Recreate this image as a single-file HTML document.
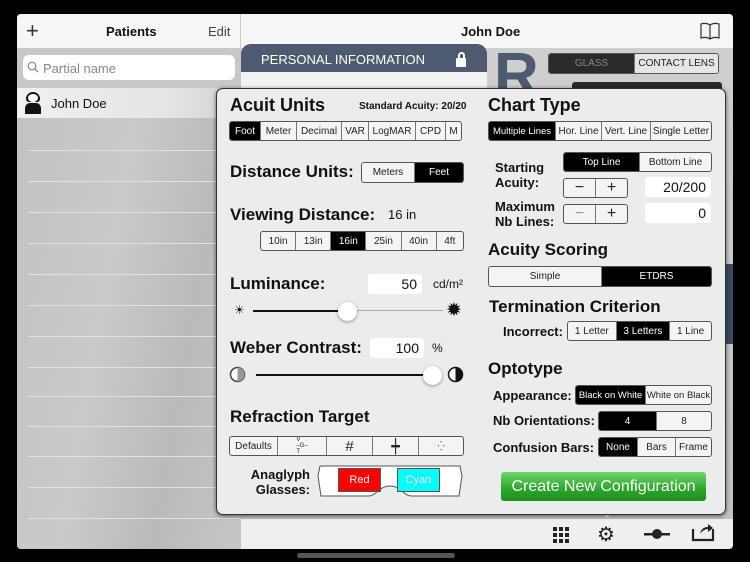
<!DOCTYPE html>
<html><head><meta charset="utf-8"><style>
*{box-sizing:border-box;margin:0;padding:0}
body{width:750px;height:562px;background:#000;position:relative;overflow:hidden;font-family:"Liberation Sans",sans-serif;color:#111}
.a{position:absolute}
.seg{position:absolute;display:flex;border:1px solid #555;border-radius:3px;overflow:hidden;background:#f4f4f4}
.seg div{flex:1 1 auto;display:flex;align-items:center;justify-content:center;font-size:10px;color:#222;border-left:1px solid #777;white-space:nowrap}
.seg div:first-child{border-left:none}
.seg .on{background:#000;color:#fff}
.h{position:absolute;font-weight:bold;font-size:18px;color:#111}
.l{position:absolute;font-weight:bold;font-size:13px;color:#111}
.inp{position:absolute;background:#fff;border-radius:3px;text-align:right;padding-right:5px;font-size:14px}
.line{position:absolute;left:28px;width:213px;height:1px;background:#e2e2e2}
</style></head><body>
<div class="a" style="left:17px;top:14px;width:716px;height:535px;background:#d4d4d4;border-radius:4px;overflow:hidden">
 <div class="a" style="left:0;top:0;width:224px;height:34px;background:#f6f6f6;border-right:1px solid #ccc"></div>
 <div class="a" style="left:9px;top:4px;font-size:22px;font-weight:300;color:#333">+</div>
 <div class="a" style="left:89px;top:10px;font-size:13px;font-weight:bold">Patients</div>
 <div class="a" style="left:191px;top:10px;font-size:13px;color:#444">Edit</div>
 <div class="a" style="left:0;top:34px;width:224px;height:40px;background:#c8c8c8"></div>
 <div class="a" style="left:6px;top:41px;width:212px;height:25px;background:#fff;border-radius:6px;font-size:13px;color:#888;padding:6px 0 0 20px">Partial name</div>
 <svg class="a" style="left:10px;top:47px" width="12" height="12"><circle cx="5" cy="5" r="3.8" fill="none" stroke="#888" stroke-width="1.2"/><path d="M7.8 7.8L11 11" stroke="#888" stroke-width="1.3"/></svg>
 <div class="a" style="left:0;top:74px;width:224px;height:30px;background:linear-gradient(90deg,#f0f0f0,#e4e4e4 70%,#cfcfcf)"></div>
 <div class="a" style="left:9px;top:78px;width:14px;height:10px;background:#111;border-radius:7px 7px 3px 3px"></div>
 <div class="a" style="left:11px;top:80px;width:10px;height:8px;background:#fff;border-radius:50%"></div>
 <div class="a" style="left:8px;top:89px;width:16px;height:11px;background:#111;border-radius:5px 5px 0 0"></div>
 <div class="a" style="left:34px;top:82px;font-size:13px">John Doe</div>
 <div class="a" style="left:0;top:104px;width:224px;height:431px;background:linear-gradient(100deg,#c2c2c2,#cacaca 40%,#bababa 70%,#c6c6c6)"></div>
 <div class="a" style="left:224px;top:0;width:492px;height:34px;background:#f6f6f6"></div>
 <div class="a" style="left:444px;top:10px;font-size:13px;font-weight:bold">John Doe</div>
 <svg class="a" style="left:683px;top:7px" width="20" height="20" viewBox="0 0 20 20"><path d="M10 4C7 2 4 2 1 3V17C4 16 7 16 10 18C13 16 16 16 19 17V3C16 2 13 2 10 4ZM10 4V18" fill="none" stroke="#333" stroke-width="1.2"/></svg>
 <div class="a" style="left:224px;top:34px;width:492px;height:471px;background:linear-gradient(180deg,#cfcfcf,#c2c2c2)"></div>
 <div class="a" style="left:224px;top:30px;width:246px;height:28px;background:#4e5a70;border-radius:10px 10px 0 0;color:#fff;font-size:13px;padding:8px 0 0 20px">PERSONAL INFORMATION</div>
 <div class="a" style="left:439px;top:44px;width:10px;height:9px;background:#fff;border-radius:1px"></div>
 <div class="a" style="left:441px;top:38px;width:7px;height:8px;border:2px solid #fff;border-bottom:none;border-radius:4px 4px 0 0"></div>
 <div class="a" style="left:224px;top:58px;width:246px;height:30px;background:#f2f2f2"></div>
 <div class="a" style="left:477px;top:26px;font-size:62px;font-weight:bold;color:#4e5a70">R</div>
 <div class="seg" style="left:531px;top:39px;width:171px;height:21px;border-radius:3px"><div class="on" style="background:#2a2a2a;color:#888;flex:0 0 85px">GLASS</div><div style="background:#e6e6e6">CONTACT LENS</div></div>
 <div class="a" style="left:555px;top:68px;width:150px;height:10px;background:#2a2a2a;border-radius:3px"></div>
 <div class="a" style="left:708px;top:250px;width:8px;height:80px;background:#3c4a66"></div>
 <div class="a" style="left:224px;top:505px;width:492px;height:30px;background:#efefef"></div>
</div>
<div class="line" style="top:150px"></div><div class="line" style="top:181px"></div><div class="line" style="top:212px"></div><div class="line" style="top:243px"></div><div class="line" style="top:274px"></div><div class="line" style="top:305px"></div><div class="line" style="top:336px"></div><div class="line" style="top:367px"></div><div class="line" style="top:396px"></div><div class="line" style="top:426px"></div><div class="line" style="top:456px"></div><div class="line" style="top:487px"></div><div class="line" style="top:518px"></div>
<svg class="a" style="left:553px;top:527px" width="16" height="16"><g fill="#222"><rect x="0" y="0" width="4" height="4"/><rect x="6" y="0" width="4" height="4"/><rect x="12" y="0" width="4" height="4"/><rect x="0" y="6" width="4" height="4"/><rect x="6" y="6" width="4" height="4"/><rect x="12" y="6" width="4" height="4"/><rect x="0" y="12" width="4" height="4"/><rect x="6" y="12" width="4" height="4"/><rect x="12" y="12" width="4" height="4"/></g></svg>
<div class="a" style="left:597px;top:522px;font-size:20px;color:#222">⚙</div>
<svg class="a" style="left:644px;top:528px" width="26" height="12"><rect x="0" y="5" width="26" height="2.5" fill="#222"/><circle cx="13" cy="6" r="5" fill="#222"/></svg>
<svg class="a" style="left:691px;top:522px" width="24" height="20"><path d="M2 7V18H22V7" fill="none" stroke="#222" stroke-width="2.2"/><path d="M9 12C10 7 13 5 17 5V2L22 6L17 10V7C14 7 11 9 9 12Z" fill="#222"/></svg>
<div class="a" style="left:297px;top:553px;width:158px;height:5px;background:#555;border-radius:3px"></div>
<div class="a" style="left:600px;top:511px;width:0;height:0;border-left:7px solid transparent;border-right:7px solid transparent;border-top:7px solid #ececec"></div>
<div class="a" style="left:216px;top:88px;width:510px;height:427px;background:#ececec;border:1.5px solid #333;border-radius:7px;box-shadow:0 1px 4px rgba(0,0,0,.6)"></div>

<div class="h" style="left:230px;top:95px">Acuit Units</div>
<div class="a" style="left:359px;top:101px;font-size:10px;font-weight:bold">Standard Acuity: 20/20</div>
<div class="seg" style="left:229px;top:121px;width:233px;height:20px"><div class="on" style="flex:0 0 30px">Foot</div><div style="flex:0 0 36px">Meter</div><div style="flex:0 0 45px">Decimal</div><div style="flex:0 0 27px">VAR</div><div style="flex:0 0 47px">LogMAR</div><div style="flex:0 0 30px">CPD</div><div>M</div></div>
<div class="h" style="left:230px;top:162px;font-size:17px">Distance Units:</div>
<div class="seg" style="left:361px;top:162px;width:103px;height:21px"><div style="flex:0 0 52px">Meters</div><div class="on">Feet</div></div>
<div class="h" style="left:230px;top:205px;font-size:17px">Viewing Distance:</div>
<div class="a" style="left:388px;top:207px;font-size:13px">16 in</div>
<div class="seg" style="left:260px;top:231px;width:204px;height:20px"><div>10in</div><div>13in</div><div class="on">16in</div><div>25in</div><div>40in</div><div>4ft</div></div>
<div class="h" style="left:230px;top:274px;font-size:17px">Luminance:</div>
<div class="inp" style="left:368px;top:274px;width:54px;height:20px;padding-top:2px">50</div>
<div class="a" style="left:433px;top:277px;font-size:12px">cd/m²</div>
<div class="a" style="left:234px;top:303px;font-size:12px">☀</div>
<div class="a" style="left:253px;top:310px;width:94px;height:2px;background:#111"></div>
<div class="a" style="left:347px;top:310px;width:96px;height:1px;background:#aaa"></div>
<div class="a" style="left:338px;top:302px;width:19px;height:19px;background:#fff;border-radius:50%;box-shadow:0 1px 3px rgba(0,0,0,.4)"></div>
<div class="a" style="left:446px;top:299px;font-size:19px">✹</div>
<div class="h" style="left:230px;top:338px;font-size:17px">Weber Contrast:</div>
<div class="inp" style="left:370px;top:338px;width:54px;height:20px;padding-top:2px">100</div>
<div class="a" style="left:432px;top:341px;font-size:12px">%</div>
<svg class="a" style="left:229px;top:366px" width="17" height="17"><circle cx="8.5" cy="8.5" r="7" fill="#fff" stroke="#444" stroke-width="1.5"/><path d="M8.5 1.5A7 7 0 0 1 8.5 15.5Z" fill="#999"/></svg>
<div class="a" style="left:256px;top:374px;width:176px;height:2px;background:#111"></div>
<div class="a" style="left:423px;top:366px;width:19px;height:19px;background:#fff;border-radius:50%;box-shadow:0 1px 3px rgba(0,0,0,.4)"></div>
<svg class="a" style="left:447px;top:366px" width="17" height="17"><circle cx="8.5" cy="8.5" r="7" fill="#fff" stroke="#111" stroke-width="1.5"/><path d="M8.5 1.5A7 7 0 0 1 8.5 15.5Z" fill="#111"/></svg>
<div class="h" style="left:230px;top:407px;font-size:17px">Refraction Target</div>
<div class="seg" style="left:229px;top:436px;width:235px;height:20px"><div style="flex:0 0 47px">Defaults</div><div style="font-size:6px;line-height:6px;flex-direction:column">V<br>–G–<br>T</div><div style="font-size:15px">#</div><div style="font-size:14px">┿</div><div style="font-size:9px">⁛</div></div>
<div class="l" style="left:248px;top:467px;text-align:right;width:62px;line-height:15px">Anaglyph Glasses:</div>
<svg class="a" style="left:316px;top:464px" width="148" height="34"><path d="M4 2H144L146 12L143 32H95C88 32 85 22 74 22C63 22 60 32 53 32H5L2 12Z" fill="#fff" stroke="#555" stroke-width="1"/></svg>
<div class="a" style="left:338px;top:468px;width:43px;height:24px;background:#f00;border:1px solid #555;color:#fff;font-size:11px;text-align:center;line-height:22px">Red</div>
<div class="a" style="left:397px;top:468px;width:43px;height:24px;background:#0ff;border:1px solid #555;color:#fff;font-size:11px;text-align:center;line-height:22px">Cyan</div>

<div class="h" style="left:488px;top:95px">Chart Type</div>
<div class="seg" style="left:488px;top:121px;width:224px;height:20px"><div class="on" style="flex:0 0 66px;font-size:9.5px">Multiple Lines</div><div style="flex:0 0 46px">Hor. Line</div><div style="flex:0 0 49px">Vert. Line</div><div>Single Letter</div></div>
<div class="l" style="left:495px;top:160px;line-height:15px">Starting<br>Acuity:</div>
<div class="seg" style="left:563px;top:152px;width:149px;height:20px"><div class="on" style="flex:0 0 75px">Top Line</div><div>Bottom Line</div></div>
<div class="seg" style="left:563px;top:178px;width:65px;height:20px"><div style="font-size:16px">−</div><div style="font-size:16px">+</div></div>
<div class="inp" style="left:645px;top:177px;width:66px;height:20px;padding-top:2px">20/200</div>
<div class="l" style="left:495px;top:199px;line-height:15px">Maximum<br>Nb Lines:</div>
<div class="seg" style="left:563px;top:204px;width:65px;height:20px"><div style="font-size:16px;color:#999">−</div><div style="font-size:16px">+</div></div>
<div class="inp" style="left:645px;top:203px;width:66px;height:20px;padding-top:2px">0</div>
<div class="h" style="left:488px;top:240px;font-size:17px">Acuity Scoring</div>
<div class="seg" style="left:488px;top:266px;width:224px;height:21px"><div style="flex:0 0 112px">Simple</div><div class="on">ETDRS</div></div>
<div class="h" style="left:489px;top:297px;font-size:17px">Termination Criterion</div>
<div class="l" style="left:503px;top:324px">Incorrect:</div>
<div class="seg" style="left:567px;top:321px;width:145px;height:20px"><div>1 Letter</div><div class="on">3 Letters</div><div>1 Line</div></div>
<div class="h" style="left:488px;top:359px;font-size:17px">Optotype</div>
<div class="l" style="left:493px;top:388px">Appearance:</div>
<div class="seg" style="left:575px;top:385px;width:137px;height:20px"><div class="on" style="flex:0 0 69px;font-size:9.5px">Black on White</div><div style="font-size:9.5px">White on Black</div></div>
<div class="l" style="left:493px;top:413px">Nb Orientations:</div>
<div class="seg" style="left:598px;top:411px;width:114px;height:20px"><div class="on" style="flex:0 0 57px">4</div><div>8</div></div>
<div class="l" style="left:493px;top:440px">Confusion Bars:</div>
<div class="seg" style="left:598px;top:437px;width:114px;height:20px"><div class="on" style="flex:0 0 38px">None</div><div style="flex:0 0 38px">Bars</div><div>Frame</div></div>
<div class="a" style="left:501px;top:472px;width:205px;height:29px;background:linear-gradient(#6fd66a,#2aa52a 60%,#1f8f22);border-radius:3px;color:#fff;font-size:16px;text-align:center;line-height:29px">Create New Configuration</div>
</body></html>
